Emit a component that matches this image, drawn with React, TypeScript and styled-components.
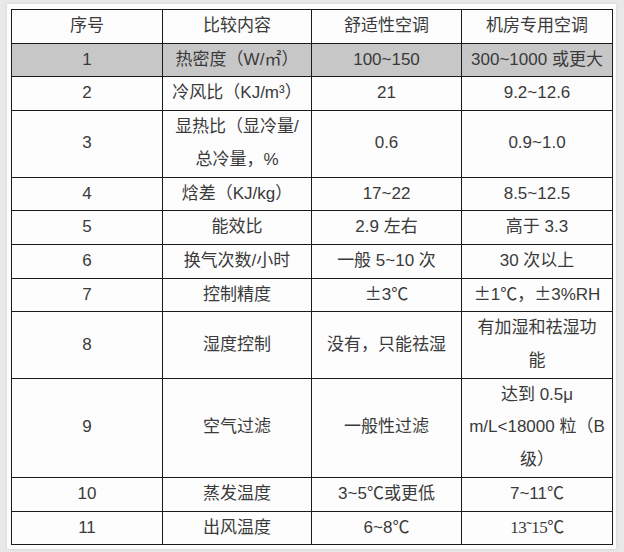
import React from "react";
import styled, { createGlobalStyle } from "styled-components";

const Global = createGlobalStyle`
  html, body {
    margin: 0;
    padding: 0;
    background: #e9e9e9;
  }
`;

const Page = styled.div`
  width: 624px;
  height: 552px;
  box-sizing: border-box;
  padding: 4px 8px 5px 7px;
  background: #e9e9e9;
`;

const Panel = styled.div`
  background: #fdfdfd;
  padding: 5px 4px 4px 4px;
  box-shadow: 0 0 3px 1px rgba(0, 0, 0, 0.06);
`;

const Table = styled.table`
  width: 601px;
  border-collapse: collapse;
  table-layout: fixed;
  font-family: "Liberation Sans", "Noto Sans CJK SC", sans-serif;
  font-size: 17px;
  color: #3a3a3a;
`;

const Col = styled.col<{ $w: number }>`
  width: ${(p) => p.$w}px;
`;

const Row = styled.tr<{ $shade?: boolean }>`
  background: ${(p) => (p.$shade ? "#c7c7c7" : "transparent")};
`;

const Cell = styled.td<{ $serif?: boolean }>`
  border: 1px solid #1a1a1a;
  padding: 0;
  text-align: center;
  vertical-align: middle;
  line-height: 32.7px;
  white-space: nowrap;
  font-family: ${(p) =>
    p.$serif
      ? '"Liberation Serif", "Noto Sans CJK SC", serif'
      : '"Liberation Sans", "Noto Sans CJK SC", sans-serif'};
  letter-spacing: ${(p) => (p.$serif ? "-0.5px" : "0")};
`;

const Sym = styled.span`
  font-family: "Noto Sans CJK SC", sans-serif;
  line-height: 1;
`;

const renderText = (s: string) => {
  const parts = s.split(/([±℃])/);
  return parts.map((p, i) =>
    p === "±" || p === "℃" ? <Sym key={i}>{p}</Sym> : <React.Fragment key={i}>{p}</React.Fragment>
  );
};

type Line = string[];
const widths = [151, 149, 150, 151];
const rows: { cells: Line[]; shade?: boolean; serifLast?: boolean }[] = [
  { cells: [["序号"], ["比较内容"], ["舒适性空调"], ["机房专用空调"]] },
  { cells: [["1"], ["热密度（W/㎡）"], ["100~150"], ["300~1000 或更大"]], shade: true },
  { cells: [["2"], ["冷风比（KJ/m³）"], ["21"], ["9.2~12.6"]] },
  { cells: [["3"], ["显热比（显冷量/", "总冷量，%"], ["0.6"], ["0.9~1.0"]] },
  { cells: [["4"], ["焓差（KJ/kg）"], ["17~22"], ["8.5~12.5"]] },
  { cells: [["5"], ["能效比"], ["2.9 左右"], ["高于 3.3"]] },
  { cells: [["6"], ["换气次数/小时"], ["一般 5~10 次"], ["30 次以上"]] },
  { cells: [["7"], ["控制精度"], ["±3℃"], ["±1℃，±3%RH"]] },
  { cells: [["8"], ["湿度控制"], ["没有，只能祛湿"], ["有加湿和祛湿功", "能"]] },
  { cells: [["9"], ["空气过滤"], ["一般性过滤"], ["达到 0.5μ", "m/L<18000 粒（B", "级）"]] },
  { cells: [["10"], ["蒸发温度"], ["3~5℃或更低"], ["7~11℃"]] },
  { cells: [["11"], ["出风温度"], ["6~8℃"], ["13˜15℃"]], serifLast: true },
];

export default function App() {
  return (
    <>
      <Global />
      <Page>
        <Panel>
          <Table>
            <colgroup>
              {widths.map((w, i) => (
                <Col key={i} $w={w} />
              ))}
            </colgroup>
            <tbody>
              {rows.map((r, i) => (
                <Row key={i} $shade={r.shade}>
                  {r.cells.map((lines, j) => {
                    const serif = r.serifLast && j === 3;
                    return (
                      <Cell key={j} $serif={serif}>
                        {lines.map((l, k) => (
                          <React.Fragment key={k}>
                            {k > 0 && <br />}
                            {serif ? l : renderText(l)}
                          </React.Fragment>
                        ))}
                      </Cell>
                    );
                  })}
                </Row>
              ))}
            </tbody>
          </Table>
        </Panel>
      </Page>
    </>
  );
}
